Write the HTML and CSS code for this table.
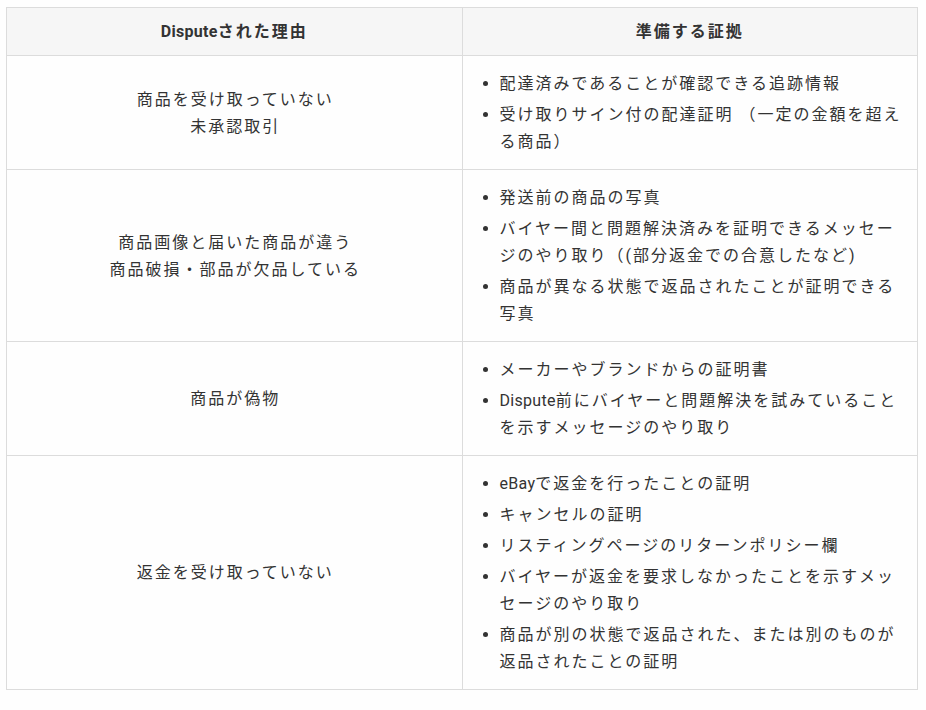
FILE: index.html
```html
<!DOCTYPE html>
<html lang="ja">
<head>
<meta charset="utf-8">
<title>Dispute</title>
<link rel="stylesheet" href="styles.css">
</head>
<body>
<table class="dispute-table">
  <thead>
    <tr>
      <th><span class="en">Dispute</span>された理由</th>
      <th>準備する証拠</th>
    </tr>
  </thead>
  <tbody>
    <tr>
      <td class="reason">商品を受け取っていない<br>未承認取引</td>
      <td class="evidence">
        <ul>
          <li>配達済みであることが確認できる追跡情報</li>
          <li>受け取りサイン付の配達証明 （一定の金額を超える商品）</li>
        </ul>
      </td>
    </tr>
    <tr>
      <td class="reason">商品画像と届いた商品が違う<br>商品破損・部品が欠品している</td>
      <td class="evidence">
        <ul>
          <li>発送前の商品の写真</li>
          <li>バイヤー間と問題解決済みを証明できるメッセージのやり取り（(部分返金での合意したなど)</li>
          <li>商品が異なる状態で返品されたことが証明できる写真</li>
        </ul>
      </td>
    </tr>
    <tr>
      <td class="reason">商品が偽物</td>
      <td class="evidence">
        <ul>
          <li>メーカーやブランドからの証明書</li>
          <li><span class="en">Dispute</span>前にバイヤーと問題解決を試みていることを示すメッセージのやり取り</li>
        </ul>
      </td>
    </tr>
    <tr>
      <td class="reason">返金を受け取っていない</td>
      <td class="evidence">
        <ul>
          <li><span class="en">eBay</span>で返金を行ったことの証明</li>
          <li>キャンセルの証明</li>
          <li>リスティングページのリターンポリシー欄</li>
          <li>バイヤーが返金を要求しなかったことを示すメッセージのやり取り</li>
          <li>商品が別の状態で返品された、または別のものが返品されたことの証明</li>
        </ul>
      </td>
    </tr>
  </tbody>
</table>
</body>
</html>
```

FILE: styles.css
```css
html, body {
  background: #fefefe;
}
body {
  margin: 7px 8px 0 6px;
  font-family: Roboto, "Noto Sans CJK JP", "Noto Sans", sans-serif;
  font-size: 16px;
  line-height: 27px;
  color: #333;
  letter-spacing: 2px;
}
.en {
  letter-spacing: 0.3px;
}
.dispute-table {
  width: 912px;
  border-collapse: collapse;
  table-layout: fixed;
}
.dispute-table th,
.dispute-table td {
  border: 1px solid #dcdcdc;
  width: 50%;
}
.dispute-table th {
  background: #f6f6f6;
  font-weight: 700;
  padding: 10px 14px;
  text-align: center;
}
.dispute-table td {
  padding: 14px 12px 14px 14px;
  vertical-align: middle;
}
.reason {
  text-align: center;
}
.evidence ul {
  margin: 0;
  padding-left: 23px;
  list-style: disc;
}
.evidence li + li {
  margin-top: 4px;
}
```
